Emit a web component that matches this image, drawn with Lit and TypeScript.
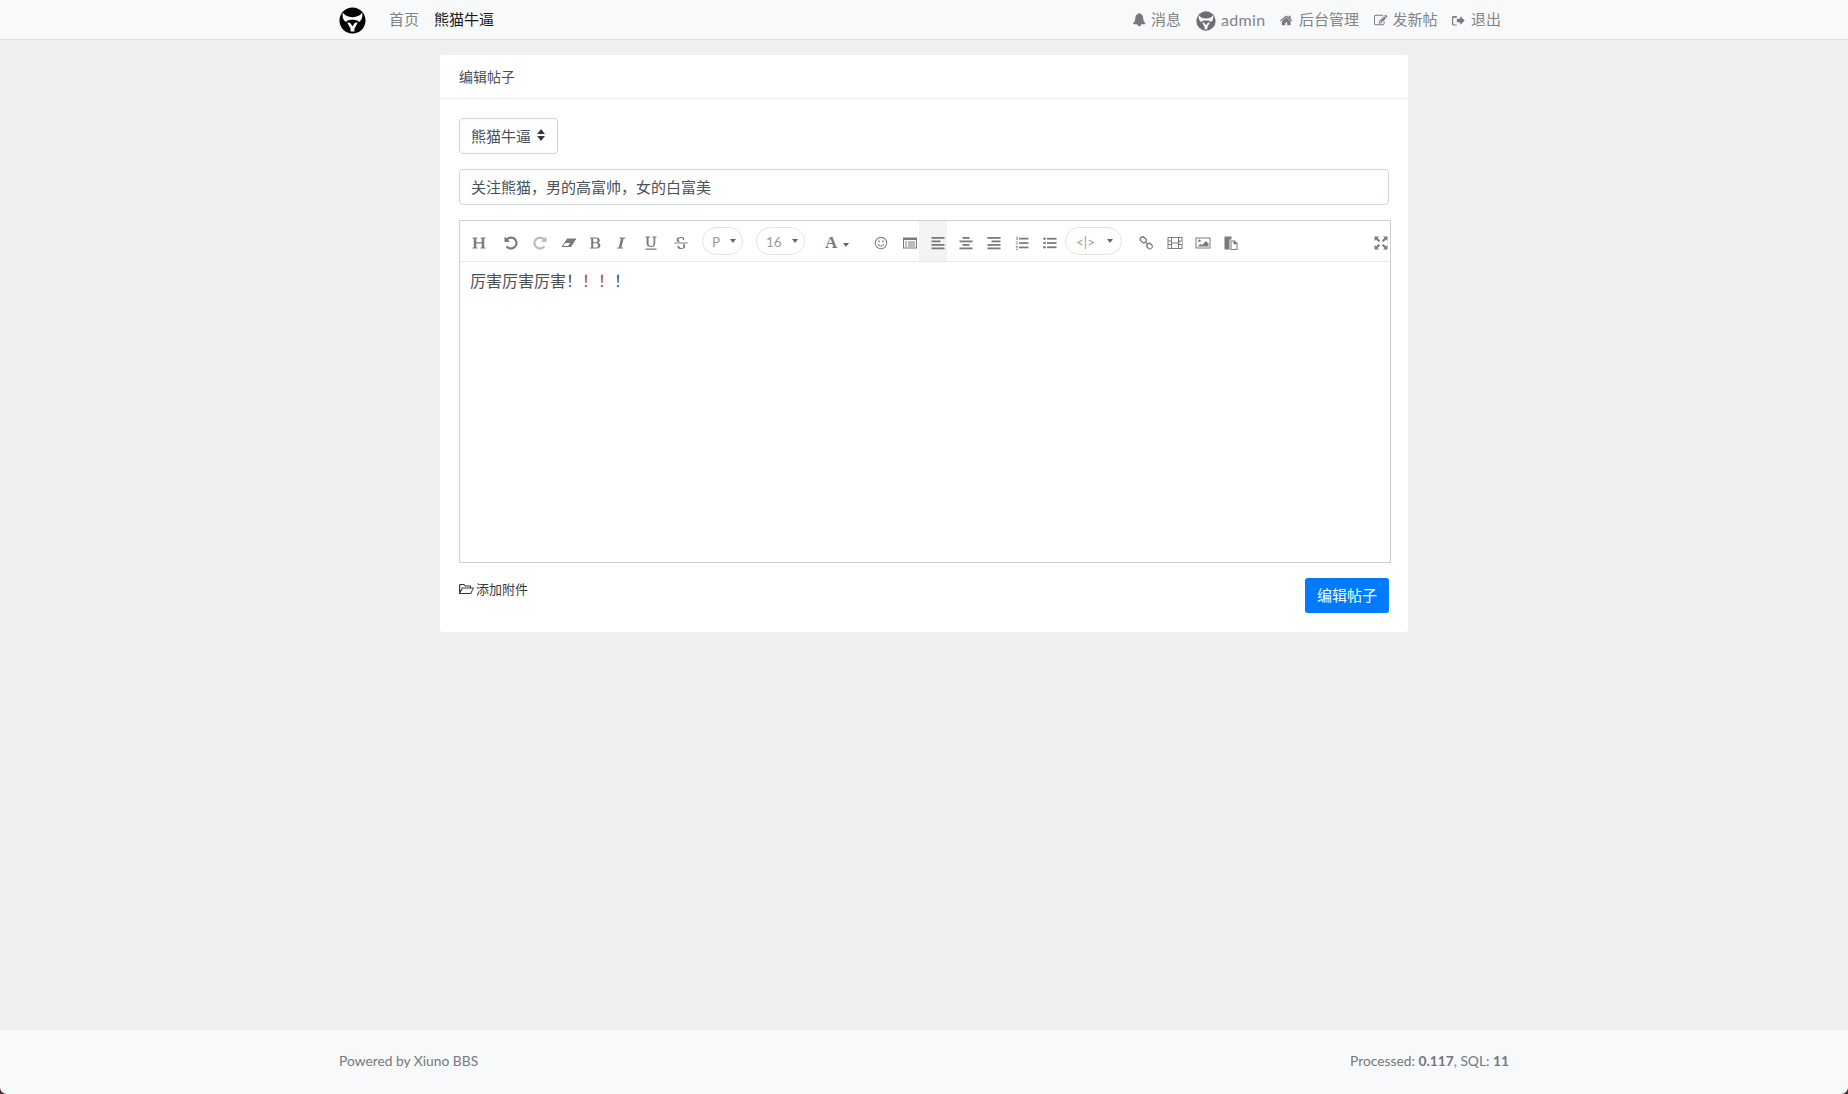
import { LitElement, html, css, svg } from "lit";
import { customElement } from "lit/decorators.js";

const fa = (d: unknown, w = 1792) => html`<svg class="fa" viewBox="0 -1536 ${w} 1792" style="width:${(w / 1792) * 13.5}px"><g transform="scale(1,-1)">${d}</g></svg>`;

const logo = (bg: string, fg: string, size: number) => html`<svg width=${size} height=${size} viewBox="0 0 28 28" class="logo">
  <circle cx="14" cy="14" r="13.5" fill=${bg}></circle>
  <path d="M4 6 C6.500 9 9.500 10.500 14 10.500 C18.500 10.500 21.500 9 24 6 C25 10 23.500 13.500 21 15.500 C19 13.800 17 13.300 14 13.300 C11 13.300 9 13.800 7 15.500 C4.500 13.500 3 10 4 6Z" fill=${fg}></path>
  <path d="M8.500 16 L11.500 16.300 L14 20 L16.500 16.300 L19.500 16 L16 22.500 V25.500 H12 V22.500Z" fill=${fg}></path>
</svg>`;

const UNDO = "M1536 640q0 156-61 298t-164 245-245 164-298 61q-147 0-284.500-55.500t-244.500-156.500l-130 129q-29 31-70 14-39-17-39-59v-448q0-26 19-45t45-19h448q42 0 59 40 17 39-14 69l-137 137q71 67 161 103.500t187 36.500q104 0 198.500-40.500t163.500-109.500 109.500-163.500 40.500-198.500-40.500-198.500-109.500-163.500-163.500-109.500-198.500-40.500q-119 0-225 52t-179 147q-7 10-23 12-15 0-25-9l-137-138q-8-7-8.500-18t6.500-20q109-132 264-204.500t327-72.500q156 0 298 61t245 164 164 245 61 298z";

const lines = (a: number[][]) => a.map(([x, y, w, h]) => svg`<rect x=${x} y=${y} width=${w} height=${h}></rect>`);

const ICONS: Record<string, unknown> = {
  h: svg`<path d="M1.500 2.500h5v1h-1.200v3.800h5.400V3.500H9.500v-1h5v1h-1.300v9h1.300v1h-5v-1h1.200V8.500H5.300v4h1.200v1h-5v-1h1.300v-9H1.500z"/>`,
  undo: svg`<g transform="translate(1.500,13.500) scale(.0085,-.0085)"><path d=${UNDO}/></g>`,
  redo: svg`<g transform="translate(14.500,13.500) scale(-.0085,-.0085)"><path d=${UNDO}/></g>`,
  eraser: svg`<path fill-rule="evenodd" d="M6 3.500H15.500L10 12H0.500zM4.300 8L2.300 11H7L9 8z"/>`,
  b: svg`<path fill-rule="evenodd" d="M3 2.500h6c2.500 0 3.800 1 3.800 2.900 0 1.300-.8 2.100-2 2.400 1.600.3 2.600 1.300 2.600 2.800 0 2-1.500 2.900-4 2.900H3v-.9h1.200V3.400H3zM6.300 3.400v3.900h1.900c1.400 0 2.300-.6 2.300-2 0-1.300-.8-1.900-2.300-1.900zM6.300 8.200v4.400h2.100c1.700 0 2.700-.6 2.700-2.200s-1-2.200-2.800-2.200z"/>`,
  i: svg`<path d="M6.500 2.500h6l-.2.9h-1.700L8.400 12.600h1.700l-.2.900h-6l.2-.9h1.700L8 3.400H6.300z"/>`,
  u: svg`<path d="M2.500 1.500h4.500v.9H5.600v6c0 1.700.9 2.500 2.500 2.500s2.500-.8 2.500-2.500v-6H9.200v-.9H13.500v.9h-1.300v6c0 2.500-1.500 3.500-4.100 3.500-2.900 0-4.500-1-4.500-3.500v-6H2.500zM2.500 13.500h11v1.200h-11z"/>`,
  s: svg`<path d="M1.500 7.500h13v1h-13zM4.500 6.700C3.900 6.200 3.600 5.500 3.600 4.800 3.600 3 5.300 2 7.800 2c1.300 0 2.400.3 3.200.7v2.300h-.9C9.800 3.500 9 2.900 7.800 2.900 6.500 2.900 5.600 3.600 5.600 4.600c0 .9.600 1.500 1.600 2.100zM5.900 9.300c-.2 1.900 .9 3.800 2.500 3.800 1.300 0 2.100-.7 2.100-1.800 0-.8-.4-1.400-.9-2h2c.4.500.6 1.100.6 1.900 0 1.800-1.700 2.800-4 2.800-1.300 0-2.700-.3-3.600-.8v-2.500h.9c.1.500.2.900.3 1.300"/>`,
  smile: svg`<path fill-rule="evenodd" d="M8 1.800a6.200 6.200 0 1 0 0 12.400A6.200 6.200 0 0 0 8 1.800zm0 1a5.200 5.200 0 1 1 0 10.400A5.200 5.200 0 0 1 8 2.800z"/><circle cx="6" cy="6.300" r=".9"/><circle cx="10" cy="6.300" r=".9"/><path d="M4.700 9.200l1-.3c.4 1 1.200 1.500 2.300 1.500s1.900-.5 2.300-1.500l1 .3c-.5 1.400-1.700 2.200-3.300 2.200s-2.800-.8-3.300-2.200z"/>`,
  table: svg`<path fill-rule="evenodd" d="M1 2.500h14v11H1zm1 2.500v7.500h12V5z"/>${lines([[3, 6.500, 2, 1], [3, 8.500, 2, 1], [3, 10.500, 2, 1], [6, 6.500, 7, 1], [6, 8.500, 7, 1], [6, 10.500, 7, 1]])}`,
  left: lines([[1.500, 2, 13, 1.800], [1.500, 5.500, 9, 1.800], [1.500, 9, 13, 1.800], [1.500, 12.500, 13, 1.800]]),
  center: lines([[4.500, 2, 7, 1.800], [1.500, 5.500, 13, 1.800], [4.500, 9, 7, 1.800], [1.500, 12.500, 13, 1.800]]),
  right: lines([[1.500, 2, 13, 1.800], [5.500, 5.500, 9, 1.800], [1.500, 9, 13, 1.800], [1.500, 12.500, 13, 1.800]]),
  ol: lines([[5, 2.800, 9.500, 1.700], [5, 7.200, 9.500, 1.700], [5, 11.600, 9.500, 1.700], [2.500, 1.500, 1, 3.500], [1.800, 6.500, 2.200, .8], [1.800, 8.500, 2.200, .8], [1.800, 11, 2.200, .7], [1.800, 12.500, 2.200, .7], [1.800, 14, 2.200, .7]]),
  ul: svg`${lines([[5, 2.800, 9.500, 1.800], [5, 7.100, 9.500, 1.800], [5, 11.400, 9.500, 1.800]])}<circle cx="2.500" cy="3.700" r="1.300"/><circle cx="2.500" cy="8" r="1.300"/><circle cx="2.500" cy="12.300" r="1.300"/>`,
  link: svg`<path fill-rule="evenodd" d="M2.500 2a3 3 0 0 1 4.200 0l1.300 1.300a3 3 0 0 1 .3 3.900l1 1a3 3 0 0 1 3.800.3l1.100 1.100a3 3 0 0 1-4.200 4.200L8.900 12.700a3 3 0 0 1-.3-3.800l-1-1a3 3 0 0 1-3.900-.3L2.500 6.300a3 3 0 0 1 0-4.300zM3.400 3a1.700 1.700 0 0 0 0 2.400l1.200 1.200a1.700 1.700 0 0 0 2.400 0 1.700 1.700 0 0 0 0-2.400L5.800 3a1.700 1.700 0 0 0-2.400 0zM10 9.700a1.700 1.700 0 0 0 0 2.300l1.100 1.100a1.700 1.700 0 0 0 2.400-2.300l-1.100-1.100a1.700 1.700 0 0 0-2.400 0z"/>`,
  film: svg`<path fill-rule="evenodd" d="M.5 2h15v12H.5zm1 1v2.500h2.500V3zm3.500 0v4.500h6V3zm7 0v2.500h2.500V3zM1.500 6.500V9h2.500V6.500zm11 0V9h2.500V6.500zM1.500 10v3h2.500v-3zm3.500-1.500V13h6V8.500zm7 1.500v3h2.500v-3z"/>`,
  image: svg`<path fill-rule="evenodd" d="M.5 2.500h15v11H.5zm1 1v9h13v-9z"/><circle cx="4.500" cy="5.700" r="1.300"/><path d="M2.500 11.500l3-2.500 1.500 1 4-4 2.500 2.500v3z"/>`,
  paste: svg`<path fill-rule="evenodd" d="M1.500 1.500h7v3H6.500V14.500H1.500zM7.500 5.500h4.300l2.700 3v6.500h-7zm1 1v7.500h5V9.300h-3V6.500z"/>`,
  full: svg`<path d="M1.500 1.500H6L4.500 3l2.600 2.600-1.500 1.500L3 4.500 1.500 6zM14.500 1.500V6L13 4.500l-2.600 2.600-1.500-1.500L11.500 3 10 1.500zM1.500 14.500V10L3 11.500l2.600-2.600 1.500 1.500L4.500 13 6 14.500zM14.500 14.500H10l1.500-1.500-2.600-2.600 1.500-1.500L13 11.500 14.500 10z"/>`,
};

type Tool =
  | { kind: "icon"; name: string; ml: number; cls?: string }
  | { kind: "pill"; text: string; ml: number; w: number; gap: number; pl: number }
  | { kind: "color"; ml: number };

const TOOLS: Tool[] = [
  { kind: "icon", name: "h", ml: 5 },
  { kind: "icon", name: "undo", ml: 4 },
  { kind: "icon", name: "redo", ml: 1, cls: "dim" },
  { kind: "icon", name: "eraser", ml: 1 },
  { kind: "icon", name: "b", ml: -2 },
  { kind: "icon", name: "i", ml: -2 },
  { kind: "icon", name: "u", ml: 2 },
  { kind: "icon", name: "s", ml: 2 },
  { kind: "pill", text: "P", ml: 7, w: 41, gap: 10, pl: 9 },
  { kind: "pill", text: "16", ml: 13, w: 49, gap: 10, pl: 9 },
  { kind: "color", ml: 15 },
  { kind: "icon", name: "smile", ml: 12 },
  { kind: "icon", name: "table", ml: 1 },
  { kind: "icon", name: "left", ml: -5, cls: "on" },
  { kind: "icon", name: "center", ml: 5 },
  { kind: "icon", name: "right", ml: 0 },
  { kind: "icon", name: "ol", ml: 0 },
  { kind: "icon", name: "ul", ml: 0 },
  { kind: "pill", text: "<|>", ml: 1, w: 57, gap: 12, pl: 10 },
  { kind: "icon", name: "link", ml: 10 },
  { kind: "icon", name: "film", ml: 1 },
  { kind: "icon", name: "image", ml: 0 },
  { kind: "icon", name: "paste", ml: 0 },
];

@customElement("app-root")
export class AppRoot extends LitElement {
  static styles = css`
    :host { display: block; font-family: "Noto Sans CJK SC", "Noto Sans", sans-serif; font-size: 15px; color: #343a40; }
    * { box-sizing: border-box; }
    .page { height: 1094px; background: #efefef; display: flex; flex-direction: column; position: relative; overflow: hidden; }
    .nav { height: 40px; flex: none; background: #f8f9fa; border-bottom: 1px solid #e2e3e5; }
    .wrap { width: 1170px; margin: 0 auto; display: flex; align-items: center; justify-content: space-between; height: 100%; }
    .nav-l, .nav-r { display: flex; align-items: center; }
    .nav-l .logo { margin: 2px 23px 0 0; }
    .nav-l span { margin-right: 15px; color: #818487; line-height: 20px; padding-bottom: 2px; }
    .nav-l span.on { color: #16181a; }
    .nav-r { color: #818487; padding-right: 8px; }
    .nav-r .it { display: flex; align-items: center; margin-left: 15px; white-space: nowrap; line-height: 20px; }
    .nav-r .it > span { padding-bottom: 2px; }
    .nav-r .it .fa { height: 15px; margin: 1px 5px 0 0; fill: #777a7d; flex: none; }
    .nav-r .it .logo { margin: 2px 5px 0 0; }
    .nav-r .it > span.latin { font-family: "Lato", sans-serif; font-size: 16px; letter-spacing: .3px; padding-bottom: 0; }
    .main { flex: 1; display: flex; justify-content: center; padding-top: 15px; align-items: flex-start; }
    .card { width: 968px; background: #fff; border-radius: 3px; }
    .card-h { height: 44px; padding: 0 19px 2px; display: flex; align-items: center; border-bottom: 1px solid #eeeeef; font-size: 14px; color: #495057; }
    .card-b { padding: 19px 19px 19px; }
    .select { width: 99px; height: 36px; border: 1px solid #ced4da; border-radius: 4px; padding: 0 11px 2px; display: flex; align-items: center; color: #495057; gap: 6px; white-space: nowrap; }
    .select svg { width: 8px; height: 12px; fill: #343a40; flex: none; }
    .input { margin-top: 15px; height: 36px; border: 1px solid #ced4da; border-radius: 4px; padding: 0 11px 2px; display: flex; align-items: center; color: #495057; }
    .editor { margin: 15px -2px 0 0; height: 343px; border: 1px solid #ccd0d7; display: flex; flex-direction: column; }
    .toolbar { height: 41px; flex: none; border-bottom: 1px solid #e8e8e8; display: flex; align-items: center; }
    .btn { width: 28px; height: 40px; padding-top: 4px; display: flex; align-items: center; justify-content: center; flex: none; }
    .btn.on { background: #f3f3f3; padding-left: 10px; }
    .btn.full { margin: 0 -5px 0 auto; }
    .btn svg { width: 16px; height: 16px; fill: #7a7a7a; flex: none; }
    .btn.dim svg { fill: #bcbcbc; }
    .pill { height: 28px; border: 1px solid #e4e4e4; border-radius: 14px; display: flex; align-items: center; color: #999; font: 13.5px "Lato", sans-serif; flex: none; white-space: nowrap; }
    .pill span { padding-top: 2px; }
    .caret { width: 0; height: 0; border-left: 3.5px solid transparent; border-right: 3.5px solid transparent; border-top: 4px solid #666; display: block; flex: none; }
    .color { width: 35px; height: 40px; padding: 4px 0 0 5px; display: flex; align-items: center; gap: 6px; flex: none; }
    .color b { font: 700 17px "Liberation Serif", serif; color: #7a7a7a; }
    .color .caret { margin-top: 3px; }
    .content { padding: 7px 10px; font-size: 16px; line-height: 23px; color: #495057; flex: 1; }
    .red { color: #c0392b; }
    .foot { display: flex; justify-content: space-between; align-items: flex-start; margin-top: 15px; }
    .attach { display: flex; align-items: center; font-size: 13px; margin-top: 1px; color: #343a40; gap: 2px; }
    .attach svg { width: 15px; height: 14px; fill: #343a40; margin-top: 1px; }
    .submit { width: 84px; height: 35px; background: #007bff; color: #fff; border-radius: 3px; padding-bottom: 2px; display: flex; align-items: center; justify-content: center; }
    .footer { height: 64px; flex: none; background: #f8f9fa; color: #74787c; font-family: "Lato", sans-serif; font-size: 13.8px; }
    .footer b { font-weight: 700; }
    .footer .wrap { padding-bottom: 3px; }
    .corner { position: absolute; width: 7px; height: 7px; bottom: 0; fill: #4c2a33; }
    .corner.l { left: 0; }
    .corner.r { right: 0; }
  `;

  private tool(t: Tool) {
    const ml = `margin-left:${t.ml}px`;
    if (t.kind === "icon") {
      return html`<div class="btn ${t.cls ?? ""}" style=${ml}><svg viewBox="0 0 16 16">${ICONS[t.name]}</svg></div>`;
    }
    if (t.kind === "pill") {
      return html`<div class="pill" style="${ml};width:${t.w}px;padding-left:${t.pl}px;gap:${t.gap}px"><span>${t.text}</span><i class="caret"></i></div>`;
    }
    return html`<div class="color" style=${ml}><b>A</b><i class="caret"></i></div>`;
  }

  render() {
    const home = svg`<path d="M1408 544v-480q0-26-19-45t-45-19h-384v384h-256v-384h-384q-26 0-45 19t-19 45v480q0 1 .5 3t.5 3l575 474 575-474q1-2 1-6zM1631 613l-62-74q-8-9-21-11h-3q-13 0-21 7l-692 577-692-577q-12-8-24-7-13 2-21 11l-62 74q-8 10-7 23.500t11 21.500l719 599q32 26 76 26t76-26l244-204v195q0 14 9 23t23 9h192q14 0 23-9t9-23v-408l219-182q10-8 11-21.500t-7-23.500z"/>`;
    const bell = svg`<path d="M1664 256q0-52-38-90t-90-38h-448q0-106-75-181t-181-75-181 75-75 181h-448q-52 0-90 38t-38 90q50 42 91 88t85 119.500 74.500 158.500 50 206 19.500 260q0 152 117 282.500t307 158.500q-8 19-8 39 0 40 28 68t68 28 68-28 28-68q0-20-8-39 190-28 307-158.500t117-282.500q0-139 19.500-260t50-206 74.500-158.500 85-119.500 91-88z"/>`;
    const edit = svg`<path d="M888 352l116 116-152 152-116-116v-56h96v-96h56zM1328 1072q-16 16-33 -1l-350-350q-17-17-1-33t33 1l350 350q17 17 1 33zM1408 478v-190q0-119-84.500-203.500t-203.500-84.500h-832q-119 0-203.500 84.500t-84.500 203.500v832q0 119 84.500 203.500t203.500 84.500h832q63 0 117-25 15-7 18-23 3-17-9-29l-49-49q-14-14-32-8-23 6-45 6h-832q-66 0-113-47t-47-113v-832q0-66 47-113t113-47h832q66 0 113 47t47 113v126q0 13 9 22l64 64q15 15 35 7t20-29zM1312 1216l288-288-672-672h-288v288zM1756 1084l-92-92-288 288 92 92q28 28 68 28t68-28l152-152q28-28 28-68t-28-68z"/>`;
    const out = svg`<path d="M1664 640q0-26-19-45l-448-448q-19-19-45-19t-45 19-19 45v224h-384q-26 0-45 19t-19 45v320q0 26 19 45t45 19h384v224q0 26 19 45t45 19 45-19l448-448q19-19 19-45zM640 160v-128q0-26-19-45t-45-19h-320q-119 0-203.500 84.500t-84.500 203.500v704q0 119 84.500 203.500t203.500 84.500h320q26 0 45-19t19-45v-128q0-26-19-45t-45-19h-320q-40 0-68-28t-28-68v-704q0-40 28-68t68-28h320q26 0 45-19t19-45z"/>`;
    return html`<div class="page">
      <div class="nav"><div class="wrap">
        <div class="nav-l">${logo("#000", "#fff", 27)}<span>首页</span><span class="on">熊猫牛逼</span></div>
        <div class="nav-r">
          <div class="it">${fa(bell)}<span>消息</span></div>
          <div class="it">${logo("#6c6f72", "#f8f9fa", 20)}<span class="latin">admin</span></div>
          <div class="it">${fa(home)}<span>后台管理</span></div>
          <div class="it">${fa(edit)}<span>发新帖</span></div>
          <div class="it">${fa(out)}<span>退出</span></div>
        </div>
      </div></div>
      <div class="main"><div class="card">
        <div class="card-h">编辑帖子</div>
        <div class="card-b">
          <div class="select">熊猫牛逼<svg viewBox="0 0 8 12"><path d="M4 0L8 5H0ZM4 12L0 7H8Z"/></svg></div>
          <div class="input">关注熊猫，男的高富帅，女的白富美</div>
          <div class="editor">
            <div class="toolbar">
              ${TOOLS.map((t) => this.tool(t))}
              <div class="btn full"><svg viewBox="0 0 16 16">${ICONS.full}</svg></div>
            </div>
            <div class="content">厉害厉害厉害！<span class="red">！！</span>！</div>
          </div>
          <div class="foot">
            <div class="attach"><svg viewBox="0 0 15 14"><path fill-rule="evenodd" d="M1 2h4l1.500 1.500H12v2h3l-2.800 6.500H0V2.500zm.2 1v5.500L3.200 5.500H11V4.500H6L4.500 3zM3.800 6.500L1.300 11h10.300l2-4.500z"/></svg>添加附件</div>
            <div class="submit">编辑帖子</div>
          </div>
        </div>
      </div></div>
      <div class="footer"><div class="wrap"><span>Powered by Xiuno BBS</span><span>Processed: <b>0.117</b>, SQL: <b>11</b></span></div></div>
      <svg class="corner l" viewBox="0 0 7 7"><path d="M0 0C0 4 3 7 7 7H0Z"/></svg>
      <svg class="corner r" viewBox="0 0 7 7"><path d="M7 0C7 4 4 7 0 7H7Z"/></svg>
    </div>`;
  }
}
